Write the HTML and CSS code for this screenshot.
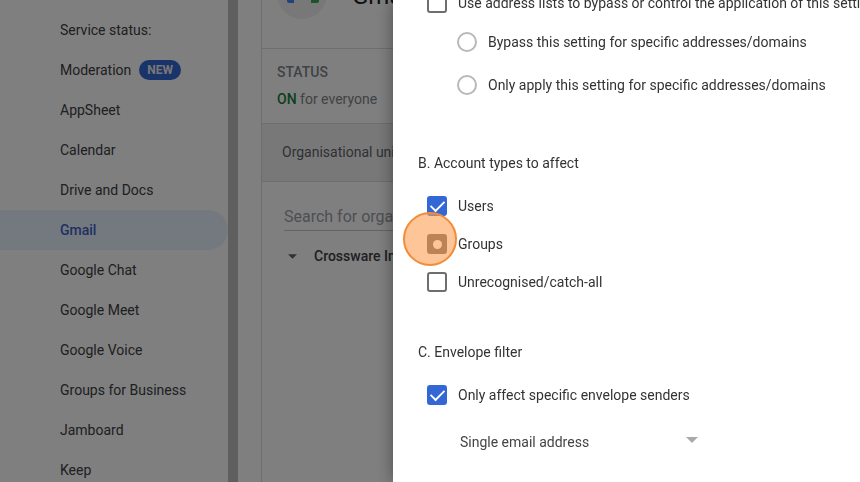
FILE: index.html
```html
<!DOCTYPE html>
<html lang="en-GB">
<head>
    <meta charset="UTF-8">
    <meta name="viewport" content="width=device-width, initial-scale=1.0">
    <title>Settings for Gmail</title>
    <link rel="stylesheet" href="styles.css">
</head>
<body>

    <div class="page">
        <nav class="sidebar">
            <a class="nav-item" href="#">Service status:</a>
            <a class="nav-item" href="#">Moderation <span class="badge">NEW</span></a>
            <a class="nav-item" href="#">AppSheet</a>
            <a class="nav-item" href="#">Calendar</a>
            <a class="nav-item" href="#">Drive and Docs</a>
            <a class="nav-item active" href="#">Gmail</a>
            <a class="nav-item" href="#">Google Chat</a>
            <a class="nav-item" href="#">Google Meet</a>
            <a class="nav-item" href="#">Google Voice</a>
            <a class="nav-item" href="#">Groups for Business</a>
            <a class="nav-item" href="#">Jamboard</a>
            <a class="nav-item" href="#">Keep</a>
        </nav>

        <main class="card">
            <header class="card-header">
                <svg class="logo" viewBox="0 0 50 50" aria-hidden="true">
                    <circle cx="25" cy="25" r="25" fill="#f1f1f1"/>
                    <path d="M10 17v15q0 2 2 2h5V21z" fill="#4285f4"/>
                    <path d="M42 17v15q0 2-2 2h-6V21z" fill="#34a853"/>
                    <path d="M10 17l15 12 17-12-4-3-13 9-12-9z" fill="#ea4335"/>
                </svg>
                <h1>Gmail</h1>
            </header>
            <section class="status">
                <h2>STATUS</h2>
                <p><span class="on">ON</span> for everyone</p>
            </section>
            <div class="units-title">Organisational units</div>
            <div class="units">
                <input class="search" type="text" placeholder="Search for organisational units" aria-label="Search for organisational units">
                <div class="unit">
                    <svg class="caret" viewBox="0 0 10 5" aria-hidden="true"><path d="M0 0h10L5 5z"/></svg>
                    <span>Crossware Internal</span>
                </div>
            </div>
        </main>
    </div>

    <div class="scrim"></div>

    <!-- Setting panel, scrolled part of the way down -->
    <div class="dialog" role="dialog" aria-label="Edit setting">
        <form class="settings">
            <label class="option"><input class="checkbox" type="checkbox"> Use address lists to bypass or control the application of this setting</label>
            <div class="radios">
                <label class="option"><input class="radio" type="radio" name="scope"> Bypass this setting for specific addresses/domains</label>
                <label class="option"><input class="radio" type="radio" name="scope"> Only apply this setting for specific addresses/domains</label>
            </div>

            <h3>B. Account types to affect</h3>
            <label class="option"><input class="checkbox" type="checkbox" checked> Users</label>
            <label class="option target"><input class="checkbox pressed" type="checkbox"> Groups<span class="click-marker"></span></label>
            <label class="option"><input class="checkbox" type="checkbox"> Unrecognised/catch-all</label>

            <h3>C. Envelope filter</h3>
            <label class="option"><input class="checkbox" type="checkbox" checked> Only affect specific envelope senders</label>
            <div class="select-box">
                <select aria-label="Envelope sender type">
                    <option>Single email address</option>
                    <option>Pattern match</option>
                </select>
                <svg class="select-arrow" viewBox="0 0 12 6" aria-hidden="true"><path d="M0 0h12L6 6z"/></svg>
            </div>
        </form>
    </div>

</body>
</html>
```
FILE: styles.css
```css
* {
    box-sizing: border-box;
}

body {
    margin: 0;
    height: 100vh;
    overflow: hidden;
    font-family: Roboto, "Liberation Sans", sans-serif;
    font-size: 14px;
    line-height: 20px;
    color: #3c4043;
    background-color: #fff;
}
h1, h2, h3, p {
    margin: 0;
}

.page {
    display: flex;
    height: 100%;
    overflow: hidden;
}

/* Left menu, the right border is the scrollbar track */
.sidebar {
    flex: 0 0 238px;
    padding-top: 10px;
    border-right: 10px solid #bebebe;
}
.nav-item {
    display: flex;
    align-items: center;
    gap: 8px;
    height: 40px;
    padding-left: 60px;
    border-radius: 0 20px 20px 0;
    color: #3c4043;
    text-decoration: none;
}
.nav-item.active {
    background-color: #e8f0fe;
    color: #3f62c4;
    font-weight: 500;
}
.badge {
    height: 20px;
    padding: 0 8px;
    border-radius: 10px;
    background-color: #3367d6;
    color: #eee;
    font-size: 12px;
    font-weight: 700;
}

/* Service card */
.card {
    flex: 1;
    margin-left: 23px;
    border-left: 1px solid #dadce0;
}
.card-header {
    display: flex;
    align-items: center;
    gap: 25px;
    height: 80px;
    margin-top: -31px;
    padding: 0 15px 30px;
    border-bottom: 1px solid #dadce0;
}
.logo {
    width: 50px;
    height: 50px;
}
.card-header h1 {
    padding-top: 4px;
    font-size: 24px;
    font-weight: 400;
    color: #202124;
}
.status {
    height: 75px;
    padding: 13px 15px;
    border-bottom: 1px solid #dadce0;
    color: #80868b;
}
.status h2 {
    margin-bottom: 7px;
    font-size: 14px;
    font-weight: 500;
}
.status .on {
    color: #188038;
    font-weight: 500;
}
.units-title {
    height: 58px;
    padding: 18px 20px;
    border-bottom: 1px solid #dadce0;
    background-color: #f1f1f1;
    color: #5f6368;
}
.units {
    padding: 20px 22px;
}
.search {
    width: 100%;
    height: 29px;
    padding: 0;
    border: 0;
    border-bottom: 1px solid #c4c7cc;
    background: none;
    font: inherit;
    font-size: 16px;
}
.search::placeholder {
    color: #9aa0a6;
}
.unit {
    display: flex;
    align-items: center;
    gap: 17px;
    padding: 15px 4px;
    font-weight: 500;
}
.caret {
    width: 9px;
    height: 5px;
    fill: #5f6368;
}

.scrim {
    position: fixed;
    inset: 0;
    background-color: rgba(0, 0, 0, 0.5);
}

/* Dialog */
.dialog {
    position: fixed;
    inset: 0 0 0 393px;
    overflow: hidden;
    background-color: #fff;
    box-shadow: 0 0 16px rgba(0, 0, 0, 0.4);
    color: #333;
}
.settings {
    margin-top: -16px;
    padding-left: 25px;
    white-space: nowrap;
}
.settings h3 {
    margin: 41px 0 14px;
    font-size: 14px;
    font-weight: 400;
}
.option {
    display: flex;
    align-items: center;
    gap: 11px;
    height: 38px;
    padding-left: 9px;
}
.radios {
    display: grid;
    gap: 5px;
    padding: 1px 0 8px 30px;
}
.checkbox,
.radio {
    appearance: none;
    flex: none;
    display: grid;
    place-content: center;
    width: 20px;
    height: 20px;
    margin: 0;
    border: 2px solid #6e6e6e;
    border-radius: 3px;
}
.radio {
    border-color: #b8b8b8;
    border-radius: 50%;
}
.checkbox:checked {
    border-color: #3367d6;
    background-color: #3367d6;
}
.checkbox:checked::before {
    content: "";
    width: 13px;
    height: 7px;
    border: solid #fff;
    border-width: 0 0 2px 2px;
    transform: translateY(-2px) rotate(-45deg) scale(0.9);
}
.checkbox.pressed {
    border-color: #5a5a5a;
    background-color: #5a5a5a;
}
.checkbox.pressed::before {
    content: "";
    width: 9px;
    height: 9px;
    border-radius: 50%;
    background-color: #fff;
}

/* Circle that marks where the click happens */
.target {
    position: relative;
}
.click-marker {
    position: absolute;
    top: -13px;
    left: -15px;
    width: 54px;
    height: 54px;
    border: 2px solid #f28c38;
    border-radius: 50%;
    background-color: rgba(252, 158, 83, 0.6);
}

.select-box {
    position: relative;
    width: 238px;
    margin: 8px 0 0 42px;
}
.select-box select {
    appearance: none;
    width: 100%;
    height: 40px;
    padding: 0;
    border: 0;
    background: none;
    font: inherit;
    color: #444;
}
.select-arrow {
    position: absolute;
    top: 15px;
    right: 0;
    width: 12px;
    height: 6px;
    fill: #aaa;
    pointer-events: none;
}
```
